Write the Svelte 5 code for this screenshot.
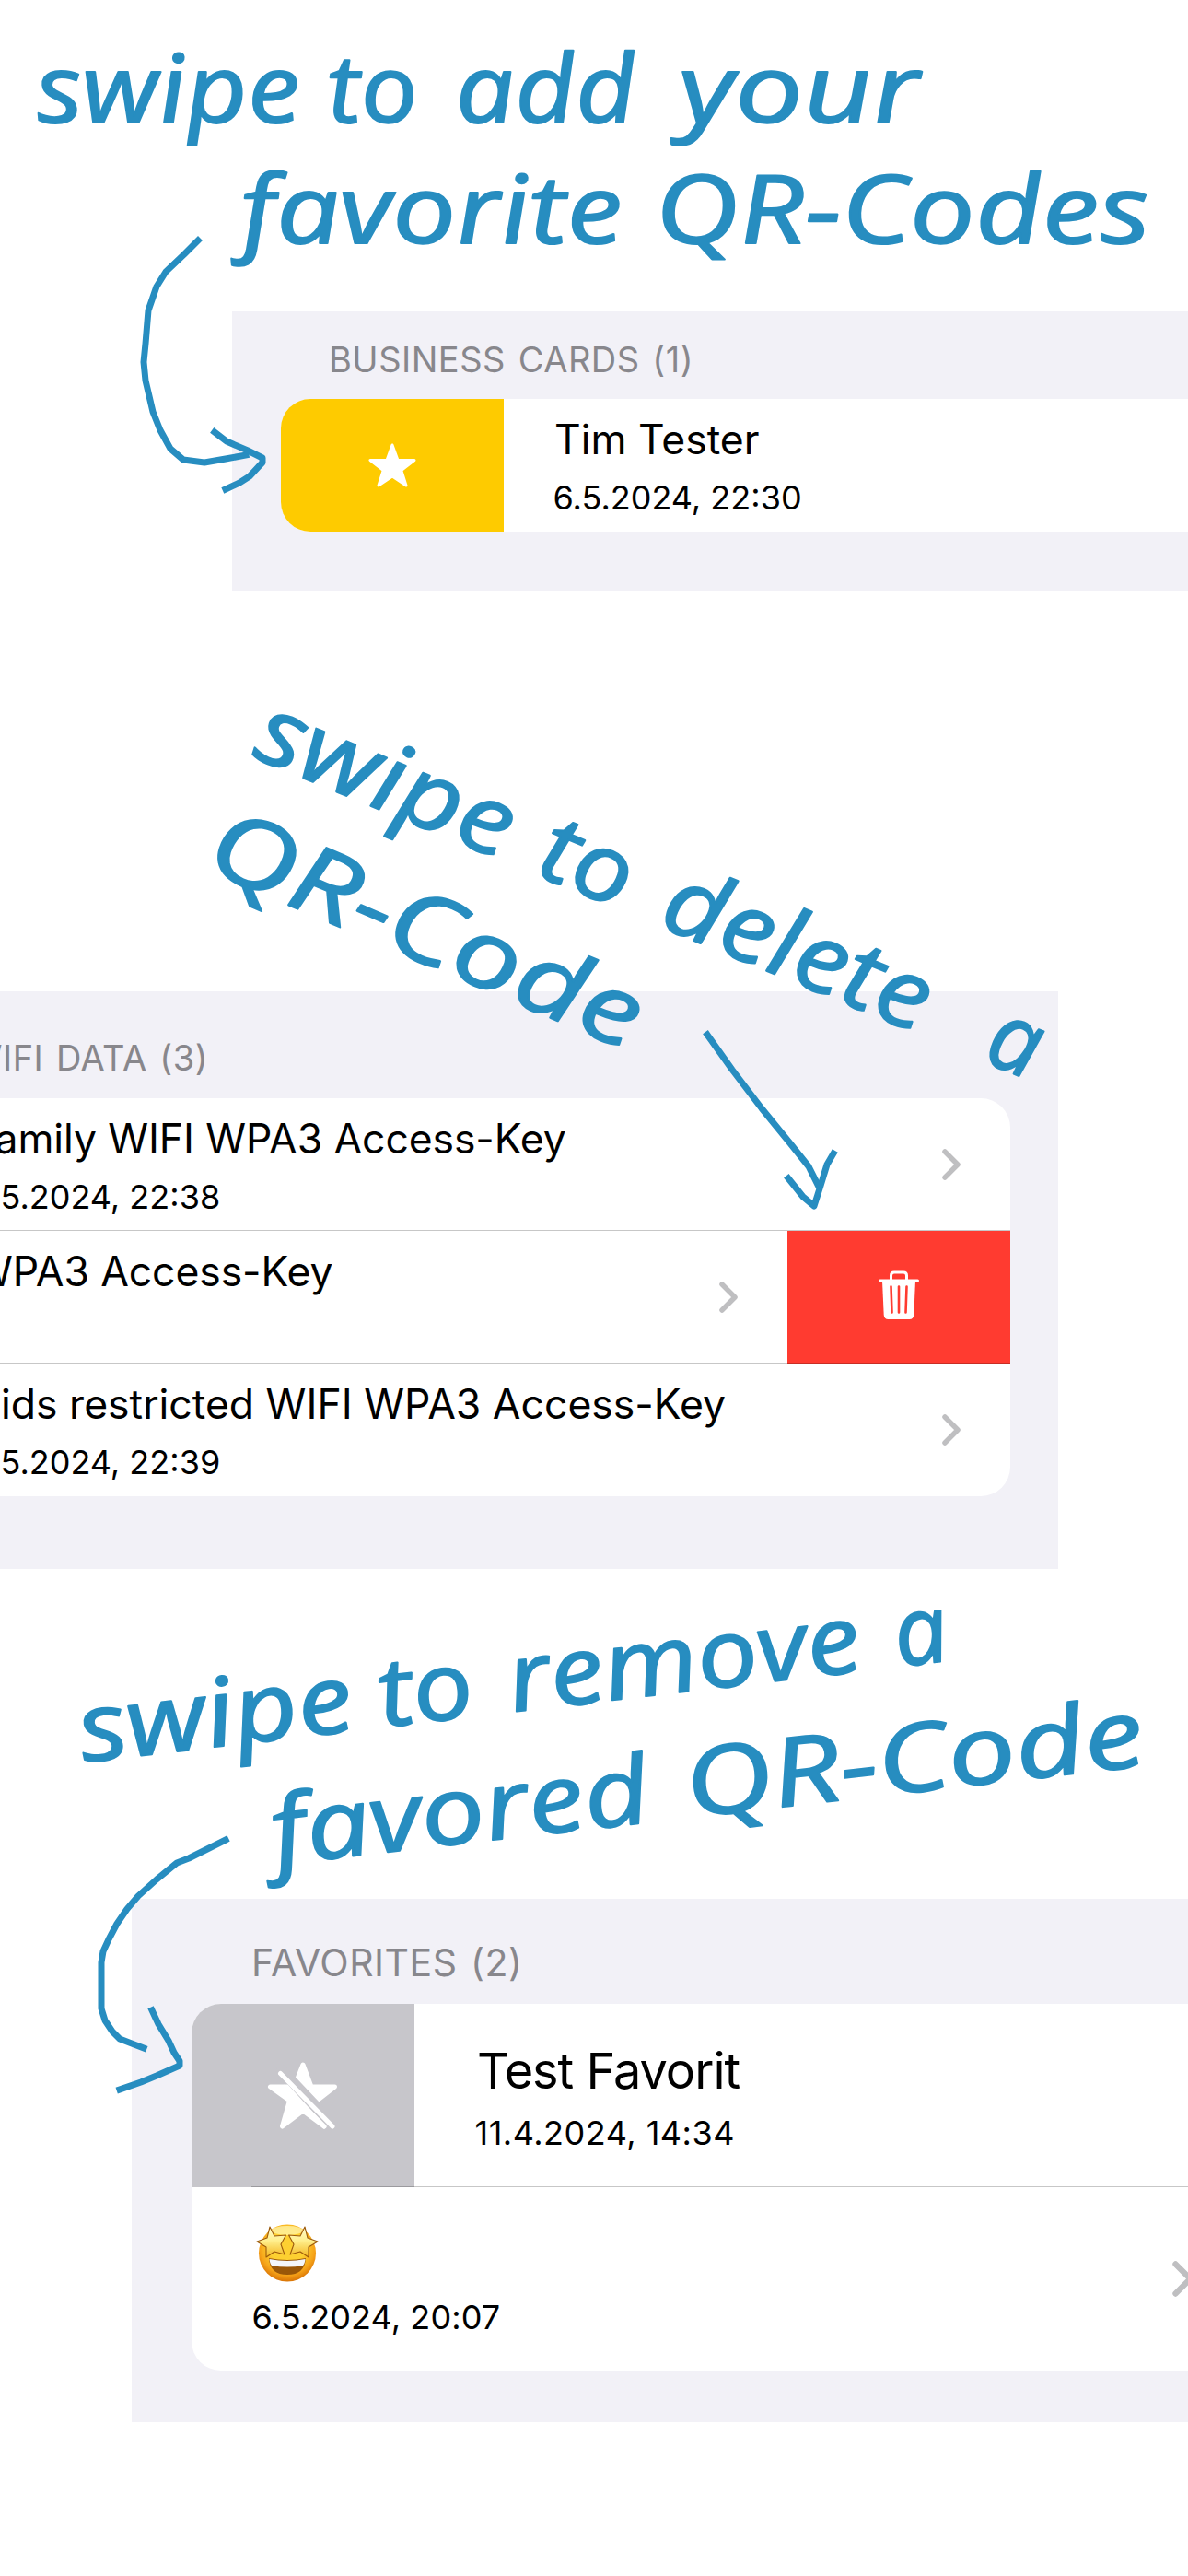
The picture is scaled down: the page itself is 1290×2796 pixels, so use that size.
<script lang="ts">
  interface Word {
    text: string;
    x: number;
    width: number;
  }
  interface Note {
    x: number;
    y: number;
    angle: number;
    words: Word[];
  }

  // every handwritten line has its own origin and tilt
  const notes: Note[] = [
    { x: 40, y: 133, angle: 0, words: [
      { text: "swipe", x: 2, width: 287 },
      { text: "to", x: 318, width: 98 },
      { text: "add", x: 457, width: 196 },
      { text: "your", x: 700, width: 262 },
    ] },
    { x: 262, y: 264, angle: 0, words: [
      { text: "favorite", x: 2, width: 415 },
      { text: "QR-Codes", x: 452, width: 537 },
    ] },
    { x: 273, y: 821, angle: 22.6, words: [
      { text: "swipe", x: 0, width: 295 },
      { text: "to", x: 333, width: 102 },
      { text: "delete", x: 478, width: 307 },
      { text: "a", x: 860, width: 56 },
    ] },
    { x: 217, y: 941, angle: 23.3, words: [
      { text: "QR-Code", x: 5, width: 502 },
    ] },
    { x: 90, y: 1913, angle: -6.7, words: [
      { text: "swipe", x: 2, width: 299 },
      { text: "to", x: 329, width: 103 },
      { text: "remove", x: 471, width: 385 },
      { text: "a", x: 893, width: 58 },
    ] },
    { x: 299, y: 2024, angle: -6.5, words: [
      { text: "favored", x: 2, width: 412 },
      { text: "QR-Code", x: 455, width: 500 },
    ] },
  ];

  const arrows: string[] = [
    "M215 261L200 276L180 295L170 311L161 337L158 373L156 393L158 413L166 447L174 467L185 487L199 499L222 502L245 498L267 494",
    "M233 469L246 479L269 489L285 497L285 502L271 517L260 524L245 531",
    "M768 1123L795 1161L827 1203L858 1241L878 1266L888 1286",
    "M856 1279L872 1299L884 1309L891 1287L898 1264L905 1252",
    "M245 1997L205 2017L192 2022L170 2040L150 2058L138 2072L127 2088L118 2105L112 2118L110 2130L110 2180L114 2193L122 2205L130 2213L156 2223",
    "M165 2182L172 2197L183 2215L189 2228L195 2237L195 2242L170 2253L153 2260L130 2268",
  ];
</script>

{#snippet chevron()}
  <svg class="chevron" viewBox="0 0 20 34" aria-hidden="true">
    <path d="M3 3L17 17L3 31" />
  </svg>
{/snippet}

<main>
  <section class="panel cards">
    <h2>BUSINESS CARDS (1)</h2>
    <div class="list">
      <div class="row">
        <div class="action star">
          <svg viewBox="0 0 54 50" aria-hidden="true">
            <path d="M27 3L33 19.5H51L36.800 30.500L42 47L27 37L12 47L17.200 30.500L3 19.500H21Z" />
          </svg>
        </div>
        <div class="text">
          <p class="title">Tim Tester</p>
          <p class="date">6.5.2024, 22:30</p>
        </div>
      </div>
    </div>
  </section>

  <section class="panel wifi">
    <h2>WIFI DATA (3)</h2>
    <div class="list">
      <div class="row line">
        <div class="text">
          <p class="title">Family WIFI WPA3 Access-Key</p>
          <p class="date">6.5.2024, 22:38</p>
        </div>
        {@render chevron()}
      </div>
      <div class="row line swiped">
        <div class="text">
          <p class="title">WPA3 Access-Key</p>
        </div>
        {@render chevron()}
        <div class="action trash">
          <svg viewBox="0 0 44 53" aria-hidden="true">
            <path class="outline" d="M1.500 11H42.500M13.500 10V5.500Q13.500 2 17 2H27Q30.500 2 30.500 5.500V10" />
            <path class="can" d="M4 11H40L38.300 48Q38 53 33.500 53H10.500Q6 53 5.700 48Z" />
            <path class="slots" d="M13.500 17.500L14.500 45.500M22 17.500V45.500M30.500 17.500L29.500 45.500" />
          </svg>
        </div>
      </div>
      <div class="row">
        <div class="text">
          <p class="title wide">Kids restricted WIFI WPA3 Access-Key</p>
          <p class="date">6.5.2024, 22:39</p>
        </div>
        {@render chevron()}
      </div>
    </div>
  </section>

  <section class="panel favorites">
    <h2>FAVORITES (2)</h2>
    <div class="list">
      <div class="row inset-line">
        <div class="action unstar">
          <svg viewBox="0 0 80 78" aria-hidden="true">
            <path class="shape" d="M40 5L49 29H74.500L54.500 44.500L63 72L40 55L17.500 72L25.500 44L4.500 29H30.500Z" />
            <path class="gap" d="M14 11L68 70" />
            <path class="gap" d="M18 9L74 68" />
            <path class="piece" d="M20 29.500L63 72" />
            <path class="slash" d="M15.500 14.500L72 72" />
          </svg>
        </div>
        <div class="text">
          <p class="title">Test Favorit</p>
          <p class="date">11.4.2024, 14:34</p>
        </div>
      </div>
      <div class="row">
        <div class="text">
          <svg class="emoji" viewBox="0 0 68 64" role="img" aria-label="star-struck">
            <defs>
              <radialGradient id="face" cx="0.5" cy="0.4" r="0.6">
                <stop offset="0.5" stop-color="#fdd031" />
                <stop offset="0.8" stop-color="#f6a318" />
                <stop offset="1" stop-color="#d97406" />
              </radialGradient>
              <linearGradient id="eye" x1="0" y1="0" x2="0" y2="1">
                <stop offset="0" stop-color="#fffbd0" />
                <stop offset="0.45" stop-color="#fff08f" />
                <stop offset="1" stop-color="#f3b51c" />
              </linearGradient>
            </defs>
            <circle cx="34" cy="32.500" r="31" fill="url(#face)" />
            <ellipse cx="34" cy="8" rx="17" ry="5" fill="#fff3a4" opacity="0.8" />
            <path d="M14 38Q34 42 54 38Q53 56 34 56Q15 56 14 38Z" fill="#9a5708" />
            <path d="M14.500 39Q34 43 53.500 39Q53 44 51 46Q34 49 17 46Q15 44 14.500 39Z" fill="#f4f6fa" />
            <g fill="url(#eye)" stroke="#9c5a0c" stroke-width="1.100" stroke-linejoin="round">
              <path d="M15 4L20 14L32.500 13L27 23L31 34L20 31L11 37L11 26L1 20L12 16Z" />
              <path d="M53 4L48 14L35.500 13L41 23L37 34L48 31L57 37L57 26L67 20L56 16Z" />
            </g>
          </svg>
          <p class="date">6.5.2024, 20:07</p>
        </div>
        {@render chevron()}
      </div>
    </div>
  </section>

  <svg class="notes" viewBox="0 0 1290 2796">
    {#each notes as note}
      <!-- the skew stands the italic up a little, closer to pen writing -->
      <g transform="translate({note.x} {note.y}) rotate({note.angle}) skewX(5)">
        {#each note.words as word}
          <text x={word.x} y="0" textLength={word.width} lengthAdjust="spacingAndGlyphs">{word.text}</text>
        {/each}
      </g>
    {/each}
    {#each arrows as d}
      <path {d} />
    {/each}
  </svg>
</main>

<style>
  :global(body) {
    margin: 0;
    background: #fff;
  }

  main {
    position: relative;
    box-sizing: border-box;
    width: 1290px;
    height: 2796px;
    padding-top: 338px;
    overflow: hidden;
    font-family: Inter, "Liberation Sans", sans-serif;
    color: #000;
  }

  h2, p { margin: 0; }

  .panel {
    box-sizing: border-box;
    background: #f2f1f7;
  }

  h2 {
    box-sizing: border-box;
    line-height: 48px;
    font-size: 38px;
    font-weight: 400;
    letter-spacing: 0.5px;
    word-spacing: 2.5px;
    color: #88878c;
    white-space: nowrap;
  }

  .list {
    background: #fff;
    overflow: hidden;
  }

  .row {
    position: relative;
    display: flex;
    align-items: center;
    height: 144px;
  }

  .line::after,
  .inset-line::after {
    content: "";
    position: absolute;
    right: 0;
    bottom: 0;
    left: 0;
    height: 1px;
    background: rgba(0, 0, 0, 0.22);
  }

  .text {
    flex: 1;
    align-self: flex-start;
    padding-top: 15.5px;
    white-space: nowrap;
  }

  .title {
    font-size: 44.5px;
    line-height: 56px;
  }

  .date {
    margin-top: 13.5px;
    font-size: 36px;
    line-height: 44px;
  }

  .action {
    display: flex;
    flex: none;
    align-items: center;
    justify-content: center;
    width: 242px;
    height: 100%;
  }

  .chevron {
    flex: none;
    width: 20px;
    height: 34px;
    margin-right: 54.5px;
    fill: none;
    stroke: #bfbfc1;
    stroke-width: 5.5;
    stroke-linecap: round;
    stroke-linejoin: round;
  }

  /* business cards */
  .cards {
    height: 304px;
    margin-left: 252px;
    padding-left: 53px;
  }
  .cards h2 { height: 95px; padding: 27.5px 0 0 52px; }
  .cards .list { border-radius: 32px 0 0 32px; }
  .cards .text { padding-left: 53.5px; }
  .cards .title { padding-left: 1.5px; }

  .star { background: #fecb00; }
  .star svg {
    width: 54px;
    height: 50px;
    fill: #fff;
    stroke: #fff;
    stroke-width: 3;
    stroke-linejoin: round;
  }

  /* wifi data, cut off by the left screen edge */
  .wifi {
    width: 1149px;
    height: 627px;
    margin-top: 434px;
    padding-right: 52px;
  }
  .wifi h2 { height: 116px; margin-left: -35px; padding-top: 48px; }
  .wifi .list { border-radius: 0 32px 32px 0; }
  .wifi .text { margin-left: -30.5px; }
  .wifi .title { letter-spacing: -0.1px; }
  .wifi .wide { padding-left: 1px; letter-spacing: 0; }
  .wifi .swiped .text { margin-left: -30px; }

  .trash { background: #ff3b30; }
  .trash svg { width: 44px; height: 53px; margin-top: -5px; }
  .trash .outline { fill: none; stroke: #fff; stroke-width: 3; stroke-linecap: round; }
  .trash .can { fill: #fff; }
  .trash .slots { fill: none; stroke: #ff3b30; stroke-width: 2.6; stroke-linecap: round; }

  /* favorites */
  .favorites {
    height: 568px;
    margin: 358px 0 0 143px;
    padding-left: 65px;
  }
  .favorites h2 {
    height: 114px;
    padding: 44.5px 0 0 65px;
    font-size: 41px;
  }
  .favorites .list { border-radius: 32px 0 0 32px; }
  .favorites .row { height: 199px; }
  .favorites .inset-line::after { left: 65px; }
  .favorites .text { padding: 38.5px 0 0 65.5px; }
  .favorites .date { margin-top: 16px; letter-spacing: 0.1px; }
  .favorites .chevron {
    width: 23px;
    height: 39px;
    margin-right: -6px;
  }
  .favorites .title {
    padding-left: 2.5px;
    font-size: 54px;
    line-height: 64px;
    letter-spacing: -1px;
  }
  .favorites .inset-line .text { padding-top: 40.5px; }
  .favorites .inset-line .date { margin-top: 13.5px; letter-spacing: 0.5px; }

  .emoji {
    display: block;
    width: 68px;
    height: 64px;
    margin-left: 4px;
  }

  .unstar { background: #c7c6cb; }
  .unstar svg {
    width: 80px;
    height: 78px;
    fill: none;
    stroke-linecap: round;
    stroke-linejoin: round;
  }
  .unstar .shape { fill: #fff; stroke: #fff; stroke-width: 5; }
  .unstar .gap { stroke: #c7c6cb; stroke-width: 7; }
  .unstar .piece, .unstar .slash { stroke: #fff; stroke-width: 5; }

  /* handwriting lies over the panels */
  .notes {
    position: absolute;
    inset: 0;
    width: 1290px;
    height: 2796px;
    pointer-events: none;
  }
  .notes text {
    font-family: "Bradley Hand", "Open Sans", "Noto Sans", sans-serif;
    font-size: 103px;
    font-style: italic;
    fill: #278dc0;
    stroke: #278dc0;
    stroke-width: 2;
    stroke-linejoin: round;
  }
  .notes path {
    fill: none;
    stroke: #278dc0;
    stroke-width: 7;
    stroke-linecap: square;
    stroke-linejoin: round;
  }
</style>
